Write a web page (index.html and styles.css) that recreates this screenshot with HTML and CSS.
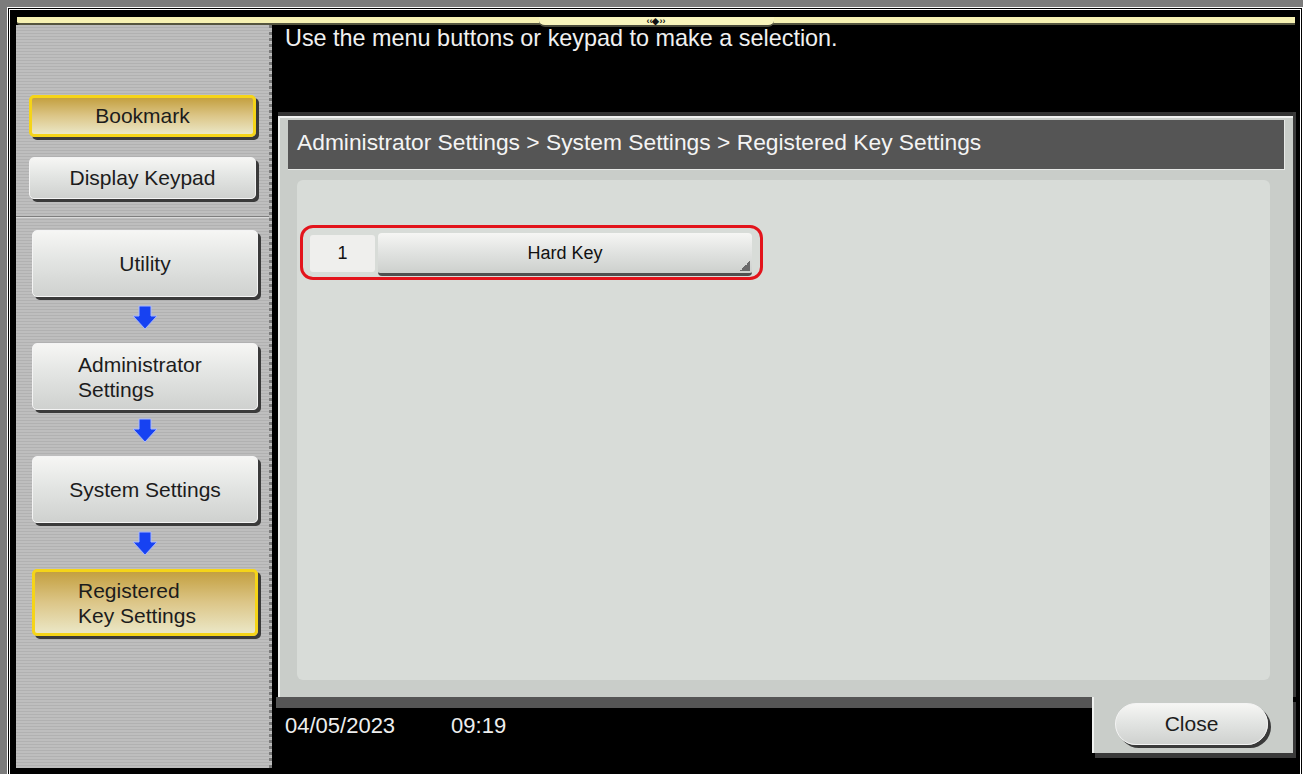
FILE: index.html
```html
<!DOCTYPE html>
<html>
<head>
<meta charset="UTF-8">
<title>Registered Key Settings</title>
<link rel="stylesheet" href="styles.css">
</head>
<body>
<div class="screen">
  <div class="handle-bar"><div class="handle">‹‹◆››</div></div>
  <div class="workspace">
    <aside class="sidebar">
      <div class="tools">
        <div class="btn btn-yellow tool">Bookmark</div>
        <div class="btn tool">Display Keypad</div>
      </div>
      <div class="nav">
        <div class="btn nav-btn">Utility</div>
        <div class="arrow"><svg width="26" height="25" viewBox="0 0 26 25"><path d="M7 1 H19 V11 H25 L13 24 L1 11 H7 Z" fill="#1742f2" stroke="#a9b8ff" stroke-width="1"/></svg></div>
        <div class="btn nav-btn two-line"><span class="label">Administrator<br>Settings</span></div>
        <div class="arrow"><svg width="26" height="25" viewBox="0 0 26 25"><path d="M7 1 H19 V11 H25 L13 24 L1 11 H7 Z" fill="#1742f2" stroke="#a9b8ff" stroke-width="1"/></svg></div>
        <div class="btn nav-btn">System Settings</div>
        <div class="arrow"><svg width="26" height="25" viewBox="0 0 26 25"><path d="M7 1 H19 V11 H25 L13 24 L1 11 H7 Z" fill="#1742f2" stroke="#a9b8ff" stroke-width="1"/></svg></div>
        <div class="btn btn-yellow nav-btn two-line"><span class="label">Registered<br>Key Settings</span></div>
      </div>
    </aside>

    <main class="main">
      <div class="message">Use the menu buttons or keypad to make a selection.</div>
      <div class="panel">
        <div class="crumbs">Administrator Settings &gt; System Settings &gt; Registered Key Settings</div>
        <div class="content">
          <div class="key-row">
            <div class="key-no">1</div>
            <div class="key-btn">Hard Key</div>
          </div>
        </div>
      </div>
      <div class="footer">
        <div class="status"><span>04/05/2023</span><span class="time">09:19</span></div>
        <div class="close-tab"><div class="btn close-btn">Close</div></div>
      </div>
    </main>
  </div>
</div>
</body>
</html>
```

FILE: styles.css
```css
body {
  margin: 0;
  width: 1303px;
  height: 774px;
  overflow: hidden;
  background-color: #7c7c7c;
  font-family: "Liberation Sans", Arial, sans-serif;
}

.screen {
  box-sizing: border-box;
  width: 1296px;
  height: 800px;
  margin: 7px 0 0 7px;
  border: 3px double #ffffff;
  background-color: #000;
  padding: 7px 5px 0 6px;
}

/* yellow strip on top */
.handle-bar {
  box-sizing: border-box;
  height: 8px;
  margin-left: 1px;
  background-color: #f6f1b2;
  border-bottom: 2px solid #55553f;
  border-bottom-left-radius: 3px;
  display: flex;
  justify-content: center;
}
.handle {
  box-sizing: border-box;
  width: 235px;
  height: 10px;
  background-color: #f8f4bc;
  border-bottom: 2px solid #4a4a3a;
  border-radius: 0 0 6px 6px;
  font-size: 9px;
  font-weight: bold;
  line-height: 8px;
  text-align: center;
  color: #111;
}

.workspace {
  display: flex;
  height: 743px;
}

/* left column */
.sidebar {
  box-sizing: border-box;
  width: 256px;
  padding-top: 70px;
  background: repeating-linear-gradient(#bebebe 0 2px, #b1b1b1 2px 3px);
  border-right: 3px dotted #7a7a7a;
}
.tools {
  padding-bottom: 17px;
  border-bottom: 1px solid #7e7e7e;
  box-shadow: 0 1px 0 #dadada;
}
.nav {
  padding-top: 13px;
}

.btn {
  box-sizing: border-box;
  display: flex;
  align-items: center;
  justify-content: center;
  border-radius: 5px;
  border: 1px solid #f4f4f4;
  background: linear-gradient(#f6f6f4, #e3e5e3 45%, #cfd1cf);
  box-shadow: 3px 3px 0 #3a3a3a;
  color: #1c1c1c;
  font-size: 21px;
}
.btn-yellow {
  border: 3px solid #f5d418;
  background: linear-gradient(#c4a040, #dcc688 50%, #ebe7c6);
}
.tool {
  width: 227px;
  height: 42px;
  margin-left: 13px;
}
.tool + .tool {
  margin-top: 20px;
}
.nav-btn {
  width: 226px;
  height: 67px;
  margin-left: 16px;
}
.two-line {
  justify-content: flex-start;
  padding-left: 45px;
}
.btn-yellow.two-line {
  padding-left: 43px;
}
.label {
  display: block;
  text-align: left;
  line-height: 25px;
}
.arrow {
  width: 226px;
  height: 46px;
  margin-left: 16px;
  display: flex;
  align-items: center;
  justify-content: center;
}
.arrow svg {
  margin-top: -5px;
}

/* right side */
.main {
  flex: 1;
  display: flex;
  flex-direction: column;
}
.message {
  height: 87px;
  padding-left: 13px;
  font-size: 23.4px;
  line-height: 26px;
  color: #f0f0f0;
}

.panel {
  box-sizing: border-box;
  height: 585px;
  margin: 0 2px 0 6px;
  padding: 4px 8px 17px 10px;
  background-color: #c9cdc9;
  border-top: 4px solid #333;
  box-shadow: 3px 0 0 #3a3a3a, inset 2px 2px 0 #f0f2f0;
}
.crumbs {
  box-sizing: border-box;
  height: 50px;
  padding: 9px 0 0 9px;
  background-color: #555555;
  border-right: 1px solid #e6e8e6;
  border-bottom: 1px solid #e6e8e6;
  color: #f4f4f4;
  font-size: 22.8px;
  line-height: 26px;
}
.content {
  box-sizing: border-box;
  height: 500px;
  margin: 10px 15px 0 9px;
  padding: 45px 0 0 3px;
  background-color: #d8dcd8;
  border-radius: 6px;
}

.key-row {
  box-sizing: border-box;
  display: flex;
  align-items: flex-start;
  gap: 3px;
  width: 463px;
  height: 55px;
  padding: 7px;
  border: 3px solid #e3141c;
  border-radius: 13px;
}
.key-no {
  width: 65px;
  height: 37px;
  display: flex;
  align-items: center;
  justify-content: center;
  background-color: #efefed;
  border-radius: 3px;
  font-size: 18px;
  color: #111;
}
.key-btn {
  box-sizing: border-box;
  width: 374px;
  height: 43px;
  margin-top: -2px;
  display: flex;
  align-items: center;
  justify-content: center;
  border-radius: 4px;
  border-bottom: 3px solid #505050;
  background:
    linear-gradient(to bottom right, transparent 50%, #6a6a6a 50%) right 2px bottom 2px / 10px 10px no-repeat,
    linear-gradient(#f6f6f4, #e0e2e0 50%, #cdd0cd);
  font-size: 18px;
  color: #111;
}

.footer {
  display: flex;
  height: 61px;
}
.status {
  flex: 1;
  margin-left: 4px;
  padding: 5px 0 0 9px;
  border-top: 11px solid #555555;
  font-size: 22px;
  line-height: 26px;
  color: #eeeeee;
}
.time {
  margin-left: 56px;
}
.close-tab {
  box-sizing: border-box;
  width: 201px;
  height: 56px;
  margin-right: 2px;
  padding: 6px 0 0 23px;
  background-color: #c9cdc9;
  box-shadow: 3px 5px 0 #3a3a3a, inset 2px 0 0 #f0f2f0;
}
.close-btn {
  width: 153px;
  height: 42px;
  border-radius: 21px;
}
```
